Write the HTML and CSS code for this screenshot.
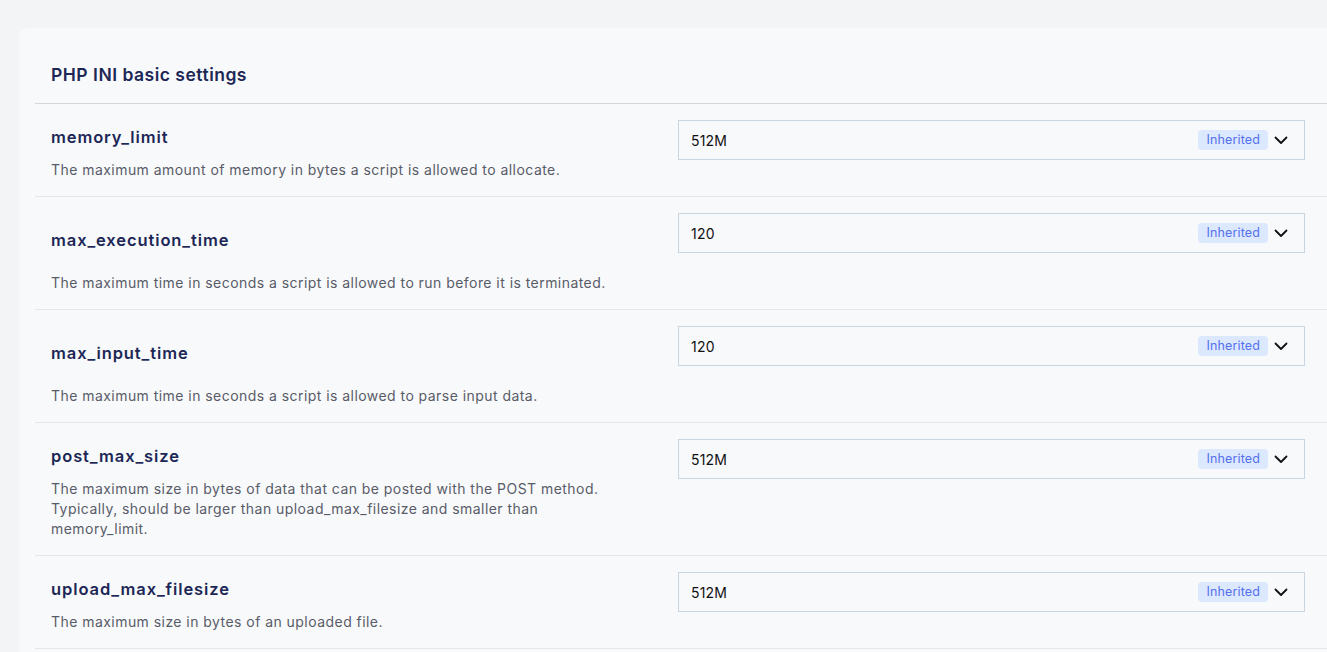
FILE: index.html
```html
<!DOCTYPE html>
<html lang="en">
<head>
<meta charset="utf-8">
<title>PHP INI basic settings</title>
<link rel="stylesheet" href="styles.css">
</head>
<body>
<div class="card">
  <div class="card-header">PHP INI basic settings</div>

  <div class="row">
    <div class="info">
      <div class="name">memory_limit</div>
      <div class="desc">The maximum amount of memory in bytes a script is allowed to allocate.</div>
    </div>
    <div class="select">
      <span class="value">512M</span>
      <span class="badge">Inherited</span>
      <svg class="chev" width="16" height="16" viewBox="0 0 16 16"><path d="M2.5 5.5 L8 11 L13.5 5.5" fill="none" stroke="#111" stroke-width="1.8" stroke-linecap="round" stroke-linejoin="round"/></svg>
    </div>
  </div>

  <div class="row row--spaced">
    <div class="info">
      <div class="name">max_execution_time</div>
      <div class="desc">The maximum time in seconds a script is allowed to run before it is terminated.</div>
    </div>
    <div class="select">
      <span class="value">120</span>
      <span class="badge">Inherited</span>
      <svg class="chev" width="16" height="16" viewBox="0 0 16 16"><path d="M2.5 5.5 L8 11 L13.5 5.5" fill="none" stroke="#111" stroke-width="1.8" stroke-linecap="round" stroke-linejoin="round"/></svg>
    </div>
  </div>

  <div class="row row--spaced">
    <div class="info">
      <div class="name">max_input_time</div>
      <div class="desc">The maximum time in seconds a script is allowed to parse input data.</div>
    </div>
    <div class="select">
      <span class="value">120</span>
      <span class="badge">Inherited</span>
      <svg class="chev" width="16" height="16" viewBox="0 0 16 16"><path d="M2.5 5.5 L8 11 L13.5 5.5" fill="none" stroke="#111" stroke-width="1.8" stroke-linecap="round" stroke-linejoin="round"/></svg>
    </div>
  </div>

  <div class="row">
    <div class="info">
      <div class="name">post_max_size</div>
      <div class="desc">The maximum size in bytes of data that can be posted with the POST method. Typically, should be larger than upload_max_filesize and smaller than memory_limit.</div>
    </div>
    <div class="select">
      <span class="value">512M</span>
      <span class="badge">Inherited</span>
      <svg class="chev" width="16" height="16" viewBox="0 0 16 16"><path d="M2.5 5.5 L8 11 L13.5 5.5" fill="none" stroke="#111" stroke-width="1.8" stroke-linecap="round" stroke-linejoin="round"/></svg>
    </div>
  </div>

  <div class="row">
    <div class="info">
      <div class="name">upload_max_filesize</div>
      <div class="desc">The maximum size in bytes of an uploaded file.</div>
    </div>
    <div class="select">
      <span class="value">512M</span>
      <span class="badge">Inherited</span>
      <svg class="chev" width="16" height="16" viewBox="0 0 16 16"><path d="M2.5 5.5 L8 11 L13.5 5.5" fill="none" stroke="#111" stroke-width="1.8" stroke-linecap="round" stroke-linejoin="round"/></svg>
    </div>
  </div>
</div>
</body>
</html>
```

FILE: styles.css
```css
html, body {
  margin: 0;
  padding: 0;
}
body {
  background: #f3f4f6;
  font-family: "Inter", "Noto Sans", sans-serif;
  overflow: hidden;
  height: 652px;
  padding-top: 28px;
  padding-left: 19px;
  box-sizing: border-box;
}
.card {
  background: #f8f9fb;
  border-top-left-radius: 8px;
  min-height: 700px;
}
.card-header {
  margin-left: 16px;
  padding: 35px 16px 16px;
  font-size: 17.5px;
  line-height: 24px;
  font-weight: 600;
  letter-spacing: 0.5px;
  color: #1c2756;
  border-bottom: 1px solid #d3d6dd;
}
.row {
  margin-left: 16px;
  padding: 16px 22px 16px 16px;
  display: grid;
  grid-template-columns: 1fr 1fr;
  border-bottom: 1px solid #e3e6ea;
}
.info {
  padding-top: 5px;
}
.name {
  font-size: 16.5px;
  line-height: 24px;
  font-weight: 600;
  letter-spacing: 0.9px;
  color: #1c2756;
}
.desc {
  margin-top: 11px;
  font-size: 14px;
  line-height: 20px;
  letter-spacing: 0.45px;
  color: #585c68;
  max-width: 560px;
}
.row--spaced .info {
  padding-top: 15px;
}
.row--spaced .desc {
  margin-top: 21px;
}
.select {
  align-self: start;
  height: 40px;
  box-sizing: border-box;
  border: 1px solid #cad5e2;
  display: flex;
  align-items: center;
  padding: 0 15px 0 12px;
}
.value {
  flex: 1;
  font-size: 14px;
  letter-spacing: 0.2px;
  color: #111;
}
.badge {
  background: #dce8fd;
  color: #5470ee;
  font-size: 12.5px;
  letter-spacing: 0.15px;
  line-height: 20px;
  height: 20px;
  padding: 0 8px;
  border-radius: 4px;
}
.chev {
  margin-left: 5px;
  display: block;
}
```
